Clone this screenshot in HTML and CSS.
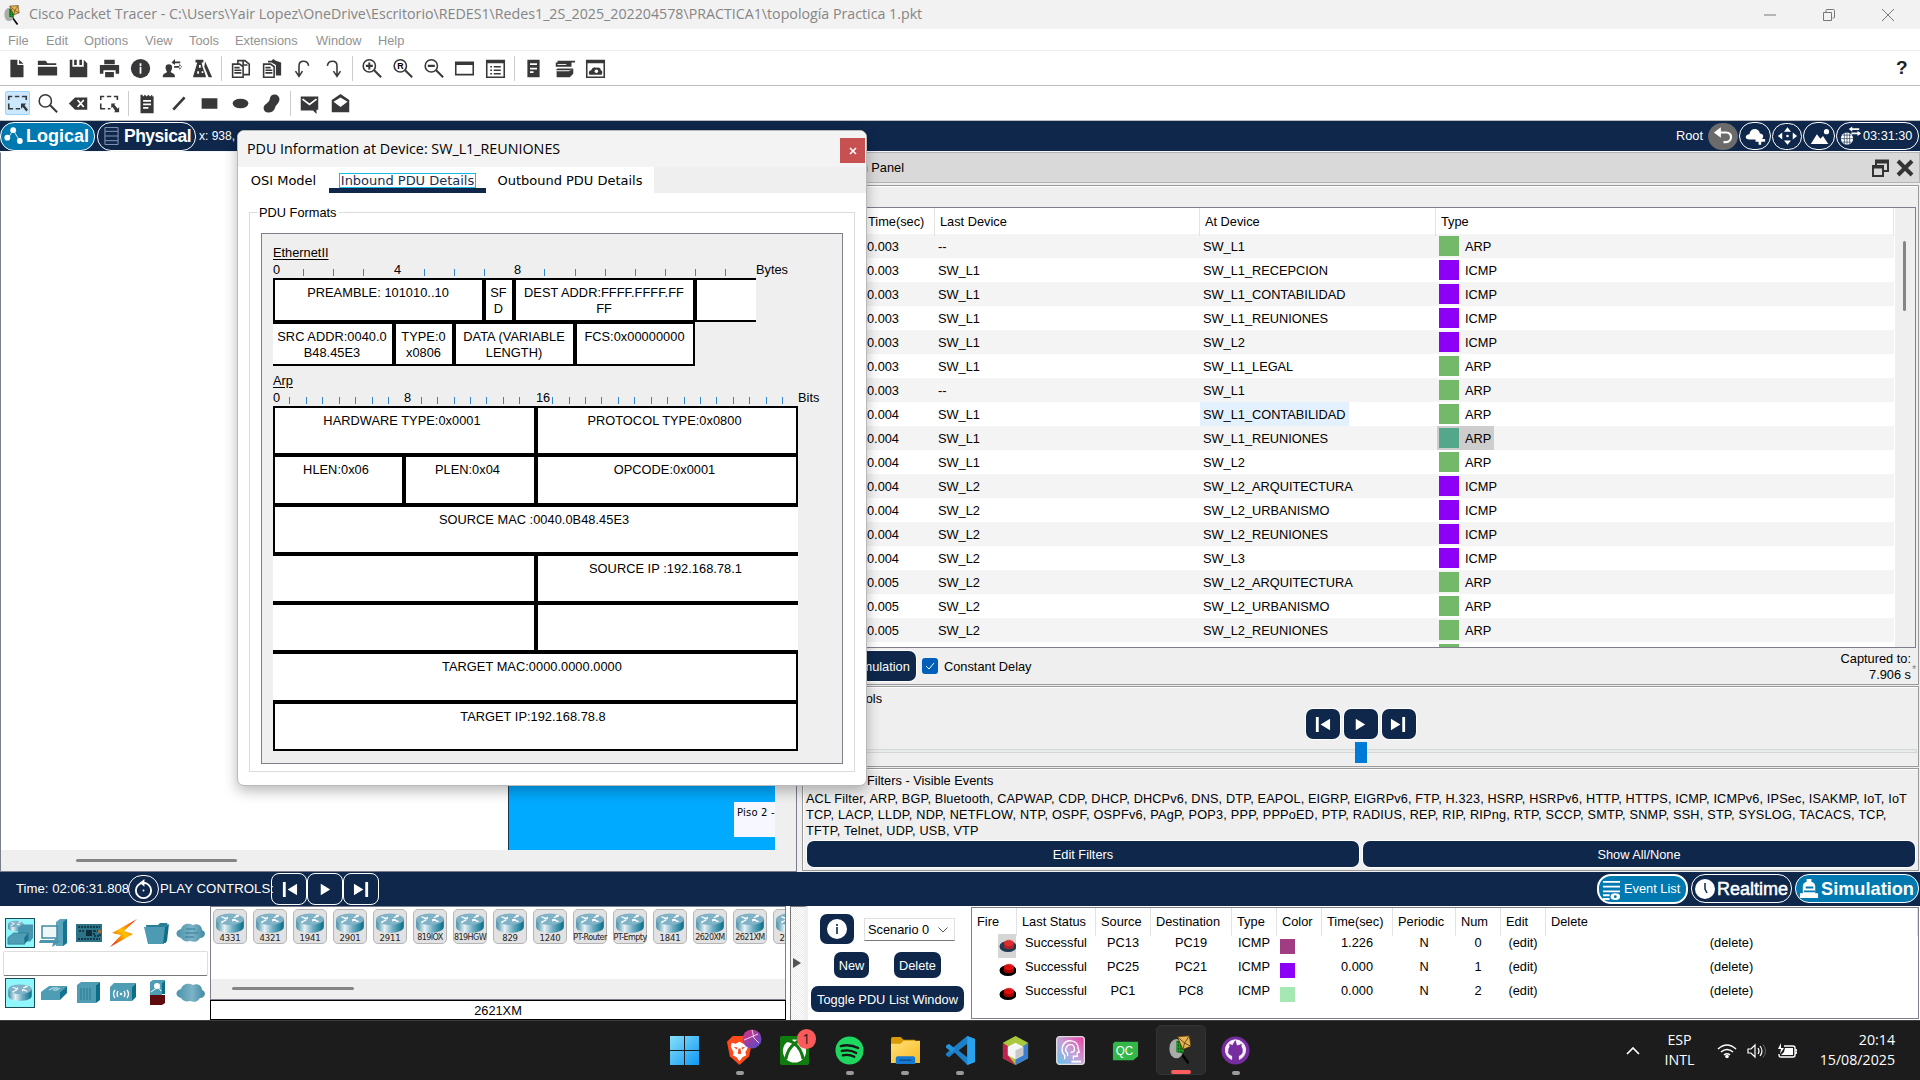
FILE: index.html
```html
<!DOCTYPE html>
<html lang="es">
<head>
<meta charset="utf-8">
<title>Cisco Packet Tracer</title>
<link rel="stylesheet" href="styles.css">
</head>
<body>
<svg class="defs" width="0" height="0">
  <defs>
    <linearGradient id="steel" x1="0" x2="1"><stop offset="0" stop-color="#3f8ba3"/><stop offset=".3" stop-color="#e6f1f5"/><stop offset=".6" stop-color="#6fadc2"/><stop offset="1" stop-color="#056f8a"/></linearGradient>
    <linearGradient id="cloudg" x1="0" x2="1"><stop offset="0" stop-color="#4a93ab"/><stop offset=".55" stop-color="#7db3c6"/><stop offset="1" stop-color="#3f8aa3"/></linearGradient>
    <linearGradient id="bolt" x1="0" x2="1" y1="1" y2="0"><stop offset="0" stop-color="#e01010"/><stop offset=".5" stop-color="#ffc400"/><stop offset="1" stop-color="#f01818"/></linearGradient>
    <linearGradient id="win" x1="0" x2="1" y1="0" y2="1"><stop offset="0" stop-color="#86e0fb"/><stop offset="1" stop-color="#1097f2"/></linearGradient>
    <linearGradient id="fold" x1="0" x2="1" y1="0" y2="1"><stop offset="0" stop-color="#ffdf78"/><stop offset="1" stop-color="#f8bb26"/></linearGradient>
    <linearGradient id="head" x1="0" x2="1" y1="1" y2="0"><stop offset="0" stop-color="#5cc8f0"/><stop offset=".5" stop-color="#c79fd8"/><stop offset="1" stop-color="#ee3ba0"/></linearGradient>
    <linearGradient id="ball" x1="0" x2="1" y1="0" y2="1"><stop offset="0" stop-color="#e22f7d"/><stop offset="1" stop-color="#4b4fd0"/></linearGradient>
    <symbol id="router" viewBox="0 0 30 21">
      <path d="M.5 6v8.500C.5 23 29.500 23 29.500 14.500V6z" fill="url(#steel)"/>
      <ellipse cx="15" cy="6.500" rx="14.500" ry="6" fill="#7fb2c6"/>
      <path d="M6 4l6 2M12 4v2H9M24 9l-6-2M18 9V7h3M6 9.500l5-2M8 9.700H5.500M19 5l5-2M21 2.800h3.500" stroke="#fff" stroke-width="1.300" fill="none"/>
    </symbol>
    <symbol id="first" viewBox="0 0 18 18"><path d="M2 1h3v16H2zM17 3v12L7 9z" fill="#fff"/></symbol>
    <symbol id="play" viewBox="0 0 18 18"><path d="M4 3l10 6-10 6z" fill="#fff"/></symbol>
    <symbol id="last" viewBox="0 0 18 18"><path d="M13 1h3v16h-3zM1 3v12l10-6z" fill="#fff"/></symbol>
    <symbol id="tracer" viewBox="0 0 28 36">
      <path d="M15 23l9 12" stroke="#050505" stroke-width="3"/>
      <ellipse cx="9" cy="17" rx="9" ry="12" fill="#a9aca8"/><path d="M9 7l8 1v15l-8-2z" fill="#0b5d12"/><path d="M10 8v14M13 8v14M16 8v14M9 11h9M9 15h9M9 19h8" stroke="#17b921" stroke-width="1"/>
      <path d="M10 2l15-1 2 13-10 4z" fill="#e9b453" stroke="#4a3410"/><path d="M10 2l9 8 6-9M17 18l2-8 8 4" fill="none" stroke="#4a3410"/>
    </symbol>
    <symbol id="fire" viewBox="0 0 18 14"><ellipse cx="9" cy="7.500" rx="8.500" ry="5.500" fill="currentColor"/><path d="M5 4v4c0 3 9 3 10 0V4z" fill="#c00000" fill-opacity=".85"/><ellipse cx="10" cy="4" rx="5" ry="3.300" fill="#f01010" fill-opacity=".85"/></symbol>
  </defs>
</svg>

<div class="desktop">
  <header class="titlebar">
    <svg class="app-icon" viewBox="0 0 28 36"><use href="#tracer"/></svg>
    <span class="title-text">Cisco Packet Tracer - C:\Users\Yair Lopez\OneDrive\Escritorio\REDES1\Redes1_2S_2025_202204578\PRACTICA1\topología Practica 1.pkt</span>
    <div class="win-controls">
      <svg viewBox="0 0 14 14"><path d="M1 7h12"/></svg>
      <svg viewBox="0 0 14 14"><path d="M1.500 4.500h8v8h-8zM4 4V2.500q0-1 1-1h6.500q1 0 1 1V9q0 1-1 1h-1"/></svg>
      <svg viewBox="0 0 14 14"><path d="M1 1l12 12M13 1L1 13"/></svg>
    </div>
  </header>

  <nav class="menubar">
    <span class="m1">File</span><span class="m2">Edit</span><span class="m3">Options</span><span class="m4">View</span><span class="m5">Tools</span><span class="m6">Extensions</span><span class="m7">Window</span><span>Help</span>
  </nav>

  <div class="toolbar">
    <i><svg viewBox="0 0 24 24"><path class="f" d="M5 2h8v6h7v14H5zM15 2l5 4.500h-5z"/></svg></i>
    <i><svg viewBox="0 0 24 24"><path class="f" d="M1 3h9l2 3h10v2H1zM1 10h22v10H1z"/></svg></i>
    <i><svg viewBox="0 0 24 24"><path class="f" d="M2 2h3v8h13V2l4 4v16H2z"/><path class="f" d="M7 2h3v6H7zM13 2h3v6h-3z"/></svg></i>
    <i><svg viewBox="0 0 24 24"><path class="f" d="M6 2h12v5H6zM1 8h22v10h-4v-4H5v4H1zM7 16h10v6H7z"/></svg></i>
    <i><svg viewBox="0 0 24 24"><circle class="f" cx="12" cy="12" r="11"/><path class="w" d="M11 6h2v3h-2zM11 10h2v8h-2z"/></svg></i>
    <i><svg viewBox="0 0 24 24"><path class="f" d="M2 22c0-5 3-4 5-6-3-5-2-9 2-9s5 4 2 9c2 2 5 1 5 6zM13 4h9v2h-9zM15 9h9v2h-9zM16 1v7l-4-3zM21 6.500v7l3-3z"/></svg></i>
    <i><svg viewBox="0 0 24 24"><path class="f" d="M4 2h9v3h-2l1 5 3 8 1 4H1l3-10 2-7H4zM15 4l8 18h-4l-5-12z"/><path class="w" d="M8 8h2v3H8zM6 15h2v3H6zM11 15h2v2h-2z"/></svg></i>
    <b></b>
    <i><svg viewBox="0 0 24 24"><path class="s" d="M3 7h8l4 3v12H3zM9 6V3h8l5 4v12h-6M5 11h6M5 14h8M5 17h8M15 3v5h5"/></svg></i>
    <i><svg viewBox="0 0 24 24"><path class="f" d="M8 3h4l2-2 3 2 6 2v15h-6V8l-5-3H8z"/><path class="s" d="M3 7h8l4 3v12H3zM5 11h6M5 14h8M5 17h8"/></svg></i>
    <i><svg viewBox="0 0 24 24"><path class="s" d="M8 20V9c0-7 10-7 11 0M4 15l4 6 4-6"/></svg></i>
    <i><svg viewBox="0 0 24 24"><path class="s" d="M16 20V9c0-7-10-7-11 0M12 15l4 6 4-6"/></svg></i>
    <b></b>
    <i><svg viewBox="0 0 24 24"><circle class="s" cx="9.500" cy="9" r="7"/><path class="s k" d="M15 14l8 8M5.500 9h8M9.500 5v8"/></svg></i>
    <i><svg viewBox="0 0 24 24"><circle class="s" cx="9.500" cy="9" r="7"/><path class="s k" d="M15 14l8 8"/><text x="6" y="13" font-size="10" font-weight="bold">R</text></svg></i>
    <i><svg viewBox="0 0 24 24"><circle class="s" cx="9.500" cy="9" r="7"/><path class="s k" d="M15 14l8 8M5.500 9h8"/></svg></i>
    <i><svg viewBox="0 0 24 24"><path class="s" d="M2 5h20v14H2zM2 7h20"/></svg></i>
    <i><svg viewBox="0 0 24 24"><path class="s" d="M2 3h20v19H2zM2 5h20M6 10h2M10 10h8M6 14h2M10 14h8M6 18h2M10 18h8"/></svg></i>
    <b></b>
    <i><svg viewBox="0 0 24 24"><path class="f" d="M5 2h14v20H5z"/><path class="ws" d="M8 7h8M8 12h8M8 16h4"/></svg></i>
    <i><svg viewBox="0 0 24 24"><path class="f" d="M4 3h20v2H4zM2 5h18v5H2zM4 12h18l-4 2H2zM3 15h14l5-3v6l-4 4H3z"/><path class="w" d="M4 7h10v1H4z"/></svg></i>
    <i><svg viewBox="0 0 24 24"><path class="s" d="M2 3h20v19H2zM2 5h20"/><path class="f" d="M5 19q-2-4 2-5 2-5 6-3 5-1 5 3 3 1 1 5z"/><circle class="w" cx="13" cy="15" r="2"/></svg></i>
    <strong>?</strong>
  </div>

  <div class="toolbar">
    <i class="on"><svg viewBox="0 0 24 24"><path class="s" d="M2 8V4h4M9 4h5M17 4h5v4M2 12v6h5M10 18h5"/><path class="f" d="M16 12h6l-2 2 4 5-2 2-4-5-2 2z"/></svg></i>
    <i><svg viewBox="0 0 24 24"><circle class="s" cx="9.500" cy="9" r="7"/><path class="s k" d="M15 14l8 8"/></svg></i>
    <i><svg viewBox="0 0 24 24"><path class="f" d="M8 5h14v14H8l-7-7z"/><path class="ws" d="M11 8l7 8M18 8l-7 8"/></svg></i>
    <i><svg viewBox="0 0 24 24"><path class="s" d="M2 8V4h4M9 4h5M17 4h4v4M2 12v6h5M10 18h3"/><path class="f" d="M14 12h5l-1.500 1.500 4 4.500L23 16v6h-6l1.500-1.500-3-4.500L14 17z"/></svg></i>
    <b></b>
    <i><svg viewBox="0 0 24 24"><path class="f" d="M4 2h2l1 2 2-2 2 2 2-2 2 2 2-2 1 2h1v19H4z"/><path class="ws" d="M7 9h9M7 13h9M7 17h6"/></svg></i>
    <i><svg viewBox="0 0 24 24"><path d="M6 19L19 5" stroke="#38383a" stroke-width="3"/></svg></i>
    <i><svg viewBox="0 0 24 24"><path class="f" d="M3 6h18v12H3z"/></svg></i>
    <i><svg viewBox="0 0 24 24"><ellipse class="f" cx="12" cy="12" rx="9" ry="5.500"/></svg></i>
    <i><svg viewBox="0 0 24 24"><path class="f" d="M10 7c1-8 12-6 11 1-1 5-4 5-5 9-2 7-13 7-13 0 0-5 6-5 7-10z"/></svg></i>
    <b></b>
    <i><svg viewBox="0 0 24 24"><path class="f" d="M2 4h20v15h-2v5l-4-4H2z"/><path class="ws" d="M4 7l8 6 8-6"/></svg></i>
    <i><svg viewBox="0 0 24 24"><path class="f" d="M2 8l10-7 10 7v14H2z"/><path class="w" d="M4 10l8-5 8 5-8 6z"/></svg></i>
  </div>

  <div class="navbar">
    <span class="pill logical"><svg viewBox="0 0 24 24"><path d="M4 16l7-11 8 13" stroke="#fff" fill="none"/><circle cx="4" cy="14" r="3.500" fill="#fff"/><circle cx="11" cy="5" r="3.500" fill="#fff"/><circle cx="19" cy="18" r="3.500" fill="#fff"/></svg>Logical</span>
    <span class="pill physical"><svg viewBox="0 0 16 20"><path d="M1 1h14v18H1zM1 5h14M1 10h14M1 15h14" stroke="#8fa0bb" fill="none"/></svg>Physical</span>
    <span class="coords">x: 938, y: 460</span>
    <span class="root">Root</span>
    <span class="pill ic back"><svg viewBox="0 0 24 20"><path d="M6 6h9c8 0 7 11 0 11h-3" stroke="#fff" stroke-width="2.500" fill="none"/><path d="M9 0v12L1 6z" fill="#fff"/></svg></span>
    <span class="pill ic w32"><svg viewBox="0 0 24 20"><path d="M5 14c-6 0-5-6 0-6 1-8 11-8 12-1 5 0 5 6 1 7z" fill="#fff"/><path d="M17 9v11M12 15h11" stroke="#fff" stroke-width="3"/></svg></span>
    <span class="pill ic"><svg viewBox="0 0 24 20"><path d="M12 0l4 5H8zM12 20l4-5H8zM1 10l5-4v8zM23 10l-5-4v8z" fill="#fff"/><circle cx="12" cy="10" r="1.500" fill="#fff"/></svg></span>
    <span class="pill ic w32"><svg viewBox="0 0 24 20"><path d="M2 19l7-11 4 5 3-3 6 9z" fill="#fff"/><circle cx="20" cy="5" r="3" fill="#fff"/></svg></span>
    <span class="pill clock"><svg viewBox="0 0 24 22"><circle cx="8" cy="14" r="7" fill="#fff"/><path d="M1 14h14M8 7v14M3 10h10M3 18h10M5 8v12M11 8v12" stroke="#0e274b" stroke-width=".7"/><path d="M12 3h10M13 8h10" stroke="#fff" stroke-width="2"/><path d="M14 0v6l-4-3zM20 5v6l4-3z" fill="#fff"/></svg>03:31:30</span>
  </div>

  <main class="main">
    <section class="workspace">
      <div class="canvas">
        <div class="floor"><div class="note">Piso 2 -</div></div>
      </div>
      <div class="hscroll"><div class="thumb"></div></div>
    </section>

    <section class="panel">
      <div class="dock-title"><span>Simulation Panel</span>
        <svg viewBox="0 0 18 18"><path d="M5 2h12v10h-4M5 7V2" fill="none" stroke="#333" stroke-width="2"/><path d="M4 2.500h14" stroke="#333" stroke-width="4"/><path d="M2 7h10v10H2z" fill="#d9d9d9" stroke="#333" stroke-width="2"/><path d="M1 8h12" stroke="#333" stroke-width="3"/></svg>
        <svg viewBox="0 0 18 18"><path d="M2 2l14 14M16 2L2 16" stroke="#333" stroke-width="4"/></svg>
      </div>
      <div class="frame events">
        <div class="frame-label">Event List</div>
        <div class="ev-table">
          <div class="ev-body">
            <div class="ev-row head"><span>Time(sec)</span><span>Last Device</span><span>At Device</span><span>Type</span></div>
            <div id="events"></div>
          </div>
          <div class="vscroll"><div class="thumb"></div></div>
        </div>
        <div class="ev-foot">
          <span class="btn reset">Reset Simulation</span>
          <svg class="check" viewBox="0 0 16 16"><rect width="16" height="16" rx="3" fill="#005fb8"/><path d="M4 8l3 3 5-6" stroke="#fff" fill="none"/></svg>
          <span class="delay">Constant Delay</span>
          <span class="captured">Captured to:<br>7.906 s</span><span class="star">*</span>
        </div>
      </div>
      <div class="frame playbox">
        <div class="frame-label">Play Controls</div>
        <div class="play-row">
          <span class="btn sq"><svg><use href="#first"/></svg></span><span class="btn sq"><svg><use href="#play"/></svg></span><span class="btn sq"><svg><use href="#last"/></svg></span>
        </div>
        <div class="slider"><div class="groove"></div><div class="knob"></div></div>
      </div>
      <div class="frame filters">
        <div class="frame-label"><span>Event List</span><span>Filters - Visible Events</span></div>
        <div class="filter-text"><span class="l1">ACL Filter, ARP, BGP, Bluetooth, CAPWAP, CDP, DHCP, DHCPv6, DNS, DTP, EAPOL, EIGRP, EIGRPv6, FTP, H.323, HSRP, HSRPv6, HTTP, HTTPS, ICMP, ICMPv6, IPSec, ISAKMP, IoT, IoT</span><br><span class="l2">TCP, LACP, LLDP, NDP, NETFLOW, NTP, OSPF, OSPFv6, PAgP, POP3, PPP, PPPoED, PTP, RADIUS, REP, RIP, RIPng, RTP, SCCP, SMTP, SNMP, SSH, STP, SYSLOG, TACACS, TCP,</span><br><span class="l3">TFTP, Telnet, UDP, USB, VTP</span></div>
        <div class="filter-btns"><span class="btn">Edit Filters</span><span class="btn">Show All/None</span></div>
      </div>
    </section>
  </main>

  <div class="timebar">
    <span class="time">Time: 02:06:31.808</span>
    <span class="pill cycle"><svg viewBox="0 0 22 22"><circle cx="11" cy="12" r="8" fill="none" stroke="#fff" stroke-width="2"/><path d="M12 0v8L7 4z" fill="#fff"/><circle cx="11" cy="12" r="1" fill="#fff"/></svg></span>
    <span class="time pc">PLAY CONTROLS:</span>
    <span class="tbtn"><svg><use href="#first"/></svg></span><span class="tbtn"><svg><use href="#play"/></svg></span><span class="tbtn"><svg><use href="#last"/></svg></span>
    <div class="modes">
      <span class="pill evlist"><svg viewBox="0 0 20 22"><path d="M1 3h18M1 8h18M1 13h18M1 17h7M1 21h7" stroke="#fff" stroke-width="2"/><ellipse cx="14" cy="18.500" rx="5" ry="3.500" fill="#fff"/><circle cx="14" cy="18.500" r="1.500" fill="#0079b0"/></svg>Event List</span>
      <span class="pill real"><svg viewBox="0 0 20 20"><circle cx="10" cy="10" r="10" fill="#fff"/><path d="M10 4v6l2 4" stroke="#0e274b" stroke-width="1.500" fill="none"/></svg>Realtime</span>
      <span class="pill sim"><svg viewBox="0 0 22 22"><path d="M1 21v-5h3V9q0-4 4-5V1h5v3q4 1 4 5v7h3v5z" fill="#fff"/><path d="M7 10h8M5 14h12" stroke="#0079b0" stroke-width="2"/></svg>Simulation</span>
    </div>
  </div>

  <section class="bottom">
    <div class="devices">
      <div class="dev-row">
        <i class="sel"><svg viewBox="0 0 30 30"><use href="#router" x="2" y="1" width="17" height="13"/><path d="M13 9l4-3h12v14l-3 4H13z" fill="#4796b0"/><path d="M2 20l6-5h16l-4 5v7H2z" fill="#4f9db5" stroke="#1b6f88" stroke-width=".6"/><path d="M20 20l4-5v7l-4 5z" fill="#16738e"/></svg></i>
        <i><svg viewBox="0 0 30 30"><path d="M17 4l4-3h7v24l-4 3h-7z" fill="#5ba5bc"/><path d="M24 4l4-3v24l-4 3z" fill="#17748f"/><path d="M3 8h15v12H3z" fill="#eef6f8" stroke="#3f8ba3" stroke-width="1.500"/><path d="M1 22h16l-2 3H0zM15 22l3-3 3 5-8 5z" fill="#4b96ae"/></svg></i>
        <i><svg viewBox="0 0 30 30"><path d="M2 6h26v18H2z" fill="#2e7287"/><path d="M4 9h22M4 21h22M20 13h6v5h-6zM5 13h5" stroke="#133c49" stroke-dasharray="2 1" stroke-width="2" fill="none"/><path d="M12 12h6v6h-6z" fill="#0f2e38"/><path d="M24 12h3v3h-3z" fill="#a36d3e"/></svg></i>
        <i><svg viewBox="0 0 30 30"><path d="M29 1L4 15l9 2L2 29l23-13-9-3z" fill="url(#bolt)"/></svg></i>
        <i><svg viewBox="0 0 30 30"><path d="M4 7h12l2-2h7l1 3-2 17H6z" fill="#2a7d95"/><path d="M2 9h20l4-3-2 17-3 3H6z" fill="#4c9bb3"/><path d="M21 26l4-3 2-17-4 3z" fill="#0f6e88"/></svg></i>
        <i><svg viewBox="0 0 30 30"><path d="M5 20c-6-1-6-8 0-9 2-6 8-6 12-4 5-2 9 1 9 5 5 2 3 8-2 8-3 5-7 4-10 3-4 1-7 0-9-3z" fill="url(#cloudg)"/><path d="M10 11h9M9 15h13M9 19h9" stroke="#337d95"/></svg></i>
      </div>
      <div class="search"></div>
      <div class="dev-row">
        <i class="sel"><svg viewBox="0 0 30 30"><use href="#router" x="2" y="5" width="26" height="19"/></svg></i>
        <i><svg viewBox="0 0 30 30"><path d="M2 14l8-6h18l-7 6v8H2z" fill="#4f9db5"/><path d="M21 14l7-6v7l-7 7z" fill="#16738e"/><path d="M10 12l4-2h5M14 12h4l3-2" stroke="#d7e9ef" fill="none"/></svg></i>
        <i><svg viewBox="0 0 30 30"><path d="M3 7l4-3h19l-4 3v18H3z" fill="#4f9db5"/><path d="M22 7l4-3v18l-4 3z" fill="#0a6e88"/><path d="M7 10v12M10 10v12M13 10v12M16 10v12" stroke="#26788f"/></svg></i>
        <i><svg viewBox="0 0 30 30"><path d="M2 9l4-4h22l-4 4v14H2z" fill="#4f9db5"/><path d="M24 9l4-4v14l-4 4z" fill="#0a6e88"/><path d="M7 12q-3 4 0 8M10 13q-2 3 0 6M19 12q3 4 0 8M16 13q2 3 0 6" stroke="#fff" fill="none" stroke-width="1.300"/><circle cx="13" cy="16" r="1.300" fill="#fff"/></svg></i>
        <i><svg viewBox="0 0 30 30"><path d="M8 4l3-2h12l-3 3v12H8z" fill="#4f9db5"/><path d="M20 5l3-3v14h-3z" fill="#0a6e88"/><path d="M8 17h15v8l-3 2H8z" fill="#5d0b0e"/><circle cx="15" cy="8" r="3" fill="#fff"/><path d="M9 14l7-5 3 4" stroke="#fff" fill="none"/></svg></i>
        <i><svg viewBox="0 0 30 30"><path d="M5 20c-6-1-6-8 0-9 2-6 8-6 12-4 5-2 9 1 9 5 5 2 3 8-2 8-3 5-7 4-10 3-4 1-7 0-9-3z" fill="url(#cloudg)"/></svg></i>
      </div>
    </div>
    <div class="models">
      <div class="tiles" id="tiles"></div>
      <div class="hscroll2"><div class="thumb"></div></div>
      <div class="model-name">2621XM</div>
    </div>
    <div class="expander"><svg viewBox="0 0 8 10"><path d="M0 0l8 5-8 5z" fill="#555"/></svg></div>
    <div class="scenario">
      <div class="sc-top"><span class="btn info"><svg viewBox="0 0 20 20"><circle cx="10" cy="10" r="10" fill="#fff"/><path d="M9.200 5h1.600v2H9.200zM9.200 8h1.600v7H9.200z" fill="#0e274b"/></svg></span>
        <span class="combo">Scenario 0<svg viewBox="0 0 10 6"><path d="M.5.5L5 5 9.500.5" fill="none" stroke="#555"/></svg></span></div>
      <div class="sc-mid"><span class="btn new">New</span><span class="btn del">Delete</span></div>
      <span class="btn toggle">Toggle PDU List Window</span>
    </div>
    <div class="pdu" id="pdu">
      <div class="pdu-row head"><span>Fire</span><span>Last Status</span><span>Source</span><span>Destination</span><span>Type</span><span>Color</span><span>Time(sec)</span><span>Periodic</span><span>Num</span><span>Edit</span><span>Delete</span></div>
    </div>
  </section>

  <footer class="taskbar">
    <div class="apps">
      <span class="app"><svg viewBox="0 0 30 30"><path d="M0 0h14.500v14.500H0zM15.500 0H30v14.500H15.500zM0 15.500h14.500V30H0zM15.500 15.500H30V30H15.500z" fill="url(#win)"/></svg></span>
      <span class="app run"><svg viewBox="0 0 30 30"><path d="M8 0h14l6 6-3 15-10 9-10-9L2 6z" fill="#fb4a1c"/><path d="M7 7l4 1 4-2 4 2 4-1 1 4-3 6 1 3-4 2-3 4-3-4-4-2 1-3-3-6z" fill="#fff"/><path d="M9 11l4 1-1 2zM21 11l-4 1 1 2zM14 13h2l1 5-2 1-2-1z" fill="#fb4a1c"/></svg><svg class="ball" viewBox="0 0 20 20"><circle cx="10" cy="10" r="9.500" fill="url(#ball)"/><path d="M2 11l14-6M10 1l2 8 5 5" stroke="#f7cfe6" fill="none"/></svg></span>
      <span class="app"><svg viewBox="0 0 30 30"><rect width="30" height="30" rx="2" fill="#107c10"/><circle cx="15" cy="15.500" r="12" fill="#fff"/><path d="M15 8C9 12 7 19 6 24M15 8c6 4 8 11 9 16M7 5c4-1 6 1 8 3 2-2 4-4 8-3" stroke="#107c10" stroke-width="3.200" fill="none"/></svg><em>1</em></span>
      <span class="app run"><svg viewBox="0 0 30 30"><circle cx="15" cy="15" r="14.500" fill="#1ed760"/><path d="M6 10.500q9-2.500 18 2M7 15.500q8-2 15 2M8 20q6.500-1.500 12 1.500" stroke="#161616" stroke-width="2.400" fill="none" stroke-linecap="round"/></svg></span>
      <span class="app run"><svg viewBox="0 0 30 30"><path d="M0 3q0-2 2-2h8l3 3h12v8H0z" fill="#d99a06"/><path d="M0 8h10l3-3h17v23H0z" fill="url(#fold)"/><path d="M5 29v-6q0-2 2-2h16q2 0 2 2v6z" fill="#1479d0"/><path d="M9 25h12" stroke="#0b4f93" stroke-width="1.500"/></svg></span>
      <span class="app run"><svg viewBox="0 0 30 30"><path d="M22 0l8 3v24l-8 3L9 17l-6 5-3-2v-2l18-15z" fill="#1b80c8"/><path d="M22 8v14l-9-7z" fill="#1c1c1c"/><path d="M0 10l3-2 6 5-3 4-6-5z" fill="#2196dc"/><path d="M22 0l8 3v24l-8 3z" fill="#2aa3ee"/></svg></span>
      <span class="app"><svg viewBox="0 0 30 30"><path d="M15 0l13 7v16l-13 7-13-7V7z" fill="#a9c83b"/><path d="M2 7l6 4v10l7 9L2 23z" fill="#bf2150"/><path d="M28 7v16l-13 7v-6l7-4V11z" fill="#3b7dce"/><path d="M15 7l8 4v9l-8 4-8-4v-9z" fill="#f5f5f5"/><path d="M15 15l8-4v9l-8 4z" fill="#c8c8c8"/></svg></span>
      <span class="app"><svg viewBox="0 0 30 30"><rect x=".7" y=".7" width="28.600" height="28.600" rx="3" fill="url(#head)" stroke="#dedede" stroke-width="1.400"/><path d="M9 24v-4q-4-3-2-10 3-6 9-5 7 1 7 8l1 4h-2v4h-4v3M12 21v-3q-4-4 0-8 5-3 7 2 1 5-4 5" stroke="#fff" stroke-width="1.400" fill="none"/><path d="M16 26.500h10" stroke="#fff" stroke-width="2"/></svg></span>
      <span class="app"><svg viewBox="0 0 30 30"><path d="M4 6h24v15l-5 4H2V8z" fill="#33b749"/><text x="5" y="20" font-size="13" fill="#fff" textLength="18" lengthAdjust="spacingAndGlyphs">QC</text></svg></span>
      <span class="app active"><svg viewBox="0 0 28 36"><use href="#tracer"/></svg></span>
      <span class="app run"><svg viewBox="0 0 30 30"><circle cx="15" cy="15" r="14.500" fill="#762d9f"/><path d="M15 4a10.500 10.500 0 0 0-4 20.200V20q-3 .5-4-2.500M15 4a10.500 10.500 0 0 1 4 20.200V19.500" fill="#f6effa" stroke="#f6effa"/><path d="M12.500 27v-6q-5-1-5-6 0-2 1.200-3.500V8l3.300 1.500h6L21.300 8v3.500q1.200 1.500 1.200 3.500 0 5-5 6v6z" fill="#762d9f"/></svg></span>
    </div>
    <div class="tray">
      <svg class="chev" viewBox="0 0 14 8"><path d="M1 7l6-6 6 6" stroke="#fff" stroke-width="1.700" fill="none"/></svg>
      <span class="lang">ESP<br>INTL</span>
      <svg class="ti" viewBox="0 0 20 16"><path d="M1 6q9-8 18 0M4 9q6-5 12 0M7 12q3-2.500 6 0" stroke="#fff" stroke-width="1.600" fill="none"/><circle cx="10" cy="13.500" r="1.800" fill="#fff"/></svg>
      <svg class="ti" viewBox="0 0 20 16"><path d="M1 6h3l4-4v12l-4-4H1zM11 5q2 3 0 6M13 3q4 5 0 10" stroke="#fff" stroke-width="1.200" fill="none"/><path d="M16 1.500q5 6.500 0 13" stroke="#666" fill="none"/></svg>
      <svg class="ti" viewBox="0 0 20 16"><path d="M7 3h9q2 0 2 2v7q0 2-2 2H4q-2 0-2-2v-1M18 7h2v3h-2" stroke="#fff" stroke-width="1.400" fill="none"/><path d="M8 5h8v7H4l3-3zM4 0L1 6h3l-1 5 4-6H4z" fill="#fff"/></svg>
      <span class="date">20:14<br>15/08/2025</span>
    </div>
  </footer>

  <div class="dialog">
    <div class="dlg-title"><span>PDU Information at Device: SW_L1_REUNIONES</span><i><svg viewBox="0 0 8 8"><path d="M1 1l6 6M7 1L1 7" stroke="#fff" stroke-width="1.600"/></svg></i></div>
    <div class="tabs"><span class="tab t1">OSI Model</span><span class="tab t2"><u>Inbound PDU Details</u></span><span class="tab t3">Outbound PDU Details</span></div>
    <div class="group">
      <div class="group-label">PDU Formats</div>
      <div class="inner">
        <div class="fmt">EthernetII</div>
        <div class="scale bytes" id="bytes"></div>
        <div class="cells eth r1"><span>PREAMBLE: 101010..10</span><span>SF<br>D</span><span>DEST ADDR:FFFF.FFFF.FF<br>FF</span><span class="nr"></span></div>
        <div class="cells eth r2"><span class="nl">SRC ADDR:0040.0<br>B48.45E3</span><span>TYPE:0<br>x0806</span><span>DATA (VARIABLE<br>LENGTH)</span><span>FCS:0x00000000</span></div>
        <div class="fmt arp">Arp</div>
        <div class="scale bits" id="bits"></div>
        <div class="cells two"><span>HARDWARE TYPE:0x0001</span><span>PROTOCOL TYPE:0x0800</span></div>
        <div class="cells three tall"><span>HLEN:0x06</span><span>PLEN:0x04</span><span>OPCODE:0x0001</span></div>
        <div class="cells one"><span class="nr">SOURCE MAC :0040.0B48.45E3</span></div>
        <div class="cells two"><span class="nl"></span><span class="nr">SOURCE IP :192.168.78.1</span></div>
        <div class="cells two"><span class="nl"></span><span class="nr"></span></div>
        <div class="cells one tall"><span class="nl">TARGET MAC:0000.0000.0000</span></div>
        <div class="cells one"><span>TARGET IP:192.168.78.8</span></div>
      </div>
    </div>
  </div>
</div>
<script src="script.js"></script>
</body>
</html>
```
FILE: styles.css
```css
* { box-sizing: border-box; }
body { margin: 0; overflow: hidden; background: #fff; color: #000; font: 12.8px/16px "Liberation Sans", Arial, sans-serif; white-space: nowrap; }
i, em { font-style: normal; }
svg { display: block; flex: none; }
.defs { position: absolute; }
.desktop { position: relative; width: 1920px; height: 1080px; display: flex; flex-direction: column; overflow: hidden; }

.titlebar { height: 29px; background: #f2f2f2; display: flex; align-items: center; padding-left: 2px; color: #858585; font: 14.230px/20px "Open Sans", "Noto Sans", sans-serif; }
.title-text { margin-top: -2px; }
.app-icon { width: 20px; height: 20px; margin-right: 7px; }
.win-controls { margin-left: auto; display: flex; gap: 45px; padding-right: 25px; }
.win-controls svg { width: 14px; height: 14px; fill: none; stroke: #777; }

.menubar { height: 22px; border-bottom: 1px solid #eee; padding: 4px 0 0 8px; display: flex; color: #929292; }
.m1, .m2 { width: 38px; } .m3 { width: 61px; } .m4 { width: 44px; } .m5 { width: 46px; } .m6 { width: 81px; } .m7 { width: 62px; }

.toolbar { height: 35px; border-bottom: 1px solid #bdbdbd; display: flex; align-items: center; padding-left: 1px; }
.toolbar i { width: 31px; height: 24px; display: flex; justify-content: center; align-items: center; }
.toolbar i svg { width: 21px; height: 21px; }
.toolbar b { width: 1px; height: 25px; margin: 0 3px; background: #ccc; }
.toolbar strong { margin-left: auto; width: 24px; font-size: 19px; color: #222; }
.toolbar .on { width: 25px; margin: 0 2px 0 4px; background: #cce8ff; border: 1px solid #99d1ff; border-radius: 2px; }
.f { fill: #38383a; } .w { fill: #fff; }
.s { fill: none; stroke: #38383a; stroke-width: 1.800; }
.k { stroke-width: 2.300; }
.ws { fill: none; stroke: #fff; stroke-width: 2; }

.navbar { height: 30px; background: #0e274b; display: flex; align-items: center; color: #fff; flex: none; }
.pill { display: flex; align-items: center; border: 1px solid #fff; border-radius: 14px; height: 29px; flex: none; color: #fff; }
.logical { width: 95px; background: #0079b0; font: bold 18px/26px "Liberation Sans", sans-serif; padding-left: 3px; gap: 2px; }
.logical svg { width: 20px; height: 20px; }
.physical { width: 99px; margin-left: 2px; font: bold 17.500px/26px "Liberation Sans", sans-serif; letter-spacing: -.5px; padding-left: 6px; gap: 5px; }
.physical svg { width: 15px; height: 20px; }
.coords { margin-left: 3px; font-size: 12px; }
.root { margin-left: auto; margin-right: 5px; }
.ic { width: 30px; height: 27px; justify-content: center; margin-right: 1px; }
.ic svg { width: 21px; height: 18px; }
.back { background: #6b6b6b; border-color: #6b6b6b; }
.w32 { width: 32px; height: 28px; }
.clock { width: 83px; height: 28px; padding-left: 3px; gap: 2px; margin-right: 1px; font-size: 12.700px; }
.clock svg { width: 21px; height: 20px; }

.main { height: 721px; display: grid; grid-template-columns: 797px 1fr; flex: none; background: #efefef; border-top: 1px solid #f4f6fa; }
.workspace { border: 1px solid #7a7d8c; border-top-color: #fff; display: flex; flex-direction: column; background: #efefef; }
.canvas { width: 774px; height: 697px; background: #fff; display: flex; justify-content: flex-end; align-items: flex-end; }
.floor { width: 267px; height: 120px; background: #00aaff; border-left: 1px solid #163a55; display: flex; justify-content: flex-end; align-items: flex-end; padding-bottom: 13px; }
.note { width: 41px; height: 35px; background: #f7f8ff; padding: 3px 0 0 3px; font: 10px/16px "DejaVu Sans", sans-serif; letter-spacing: .2px; }
.hscroll { flex: 1; padding: 9px 0 0 75px; }
.hscroll .thumb, .hscroll2 .thumb { width: 161px; height: 3px; border-radius: 2px; background: #858585; }

.panel { display: flex; flex-direction: column; padding: 0 1px 0 5px; }
.dock-title { height: 31px; border: 1px solid #b4b4b4; background: #d9d9d9; display: flex; align-items: center; padding: 1px 5px 0 5px; margin-right: -1px; }
.dock-title span { margin-right: auto; }
.dock-title svg { width: 18px; height: 18px; margin-left: 7px; }
.frame { border: 1px solid #9a9a9a; box-shadow: inset 1px 1px #fff; background: #efefef; }
.frame-label { line-height: 16px; padding-left: 3px; }
.events { margin-top: 2px; height: 500px; display: flex; flex-direction: column; }
.events .frame-label { height: 21px; }
.ev-table { height: 441px; margin: 0 2px 0 3px; border: 1px solid #7d7f8c; display: flex; background: #fff; overflow: hidden; }
.ev-body { width: 1087px; overflow: hidden; }
.ev-row { display: grid; grid-template-columns: 128px 265px 236px 1fr; height: 24px; line-height: 26px; letter-spacing: -.01px; }
.ev-row > span { padding-left: 60px; }
.ev-row > span + span { padding-left: 3px; display: flex; align-items: flex-start; }
.ev-row:nth-child(odd) { background: #f4f4f4; }
.ev-row.head { height: 26px; line-height: 28px; background: #fff; }
.ev-row.head > span { border-right: 1px solid #e3e3e3; padding-left: 61px; }
.ev-row.head > span + span { padding-left: 5px; }
.hover { background: #e2f1fd; margin-left: -3px; padding: 0 3px; height: 24px; }
.sw { width: 20px; height: 20px; background: #74b869; margin: 2px 6px 0 0; }
.sw.icmp { background: #8c00f5; }
.picked { background: #cdcdcd; display: flex; align-items: flex-start; margin-left: -2px; padding: 0 3px 0 2px; height: 24px; }
.picked .sw { background: #55a78b; }
.vscroll { flex: 1; background: #efefef; margin-left: 1px; padding: 33px 0 0 8px; }
.vscroll .thumb { width: 3px; height: 70px; background: #858585; border-radius: 2px; }
.ev-foot { display: flex; align-items: center; height: 36px; padding-left: 4px; }
.btn { background: #0e274b; color: #fff; border-radius: 7px; display: flex; align-items: center; justify-content: center; box-shadow: 0 0 0 1px #fff; flex: none; padding-top: 1px; }
.reset { width: 109px; height: 30px; }
.check { width: 16px; height: 16px; margin: 0 6px 0 6px; }
.delay { padding-top: 1px; }
.captured { margin-left: auto; text-align: right; padding-top: 1px; }
.star { width: 7px; padding: 5px 0 0 1px; font-size: 11px; color: #888; }
.playbox { margin-top: 1px; height: 81px; }
.playbox .frame-label { padding-top: 4px; height: 22px; }
.play-row { display: flex; gap: 4px; justify-content: center; height: 33px; }
.sq { width: 34px; height: 30px; padding-top: 0; }
.sq svg { width: 17px; height: 17px; }
.slider { height: 21px; display: grid; justify-items: center; align-items: center; }
.groove, .knob { grid-area: 1 / 1; }
.groove { width: 1112px; height: 4px; border: 1px solid #d3d7d6; background: #e8ebea; margin-top: -4px; }
.knob { width: 12px; height: 21px; background: #007ad9; }
.filters { margin-top: 1px; height: 103px; padding: 4px 3px 0; }
.filters .frame-label { padding-left: 0; height: 18px; display: flex; }
.filters .frame-label span:first-child { width: 61px; }
.filter-text { height: 50px; font-size: 12.700px; }
.l1 { letter-spacing: .158px; } .l2 { letter-spacing: .225px; } .l3 { letter-spacing: .18px; }
.filter-btns { display: grid; grid-template-columns: 1fr 1fr; gap: 4px; padding-left: 1px; }
.filter-btns .btn { height: 26px; padding-top: 2px; }

.timebar { height: 34px; background: #0e274b; display: flex; align-items: center; padding-left: 16px; color: #fff; flex: none; }
.time { font-size: 13.200px; width: 112px; }
.cycle { width: 31px; height: 28px; justify-content: center; }
.cycle svg { width: 21px; height: 21px; }
.pc { padding-left: 1px; width: 112px; letter-spacing: .07px; }
.tbtn { width: 36px; height: 32px; border: 1px solid #fff; border-radius: 8px; display: flex; align-items: center; justify-content: center; }
.tbtn svg { width: 17px; height: 17px; }
.modes { margin-left: auto; display: flex; gap: 3px; margin-right: 1px; }
.evlist { width: 91px; height: 30px; border-width: 2px; background: #0079b0; padding-left: 3px; gap: 3px; }
.evlist svg { width: 19px; height: 21px; }
.real { width: 101px; font: 500 18px/26px "Liberation Sans", sans-serif; padding-left: 3px; gap: 2px; -webkit-text-stroke: .5px #fff; }
.real svg { width: 20px; height: 20px; }
.sim { width: 124px; background: #0079b0; font: bold 18.200px/26px "Liberation Sans", sans-serif; padding-left: 3px; gap: 1px; }
.sim svg { width: 21px; height: 21px; }

.bottom { height: 114px; display: flex; flex: none; background: #fff; }
.devices { width: 210px; padding: 12px 2px 0 3px; }
.dev-row { display: flex; gap: 4.300px; height: 30px; padding-left: 2px; }
.dev-row i { width: 30px; height: 30px; }
.dev-row .sel { background: #8ff7fb; border: 1px solid #1b4d57; }
.dev-row .sel svg { width: 28px; height: 28px; }
.search { height: 25px; margin: 3px 0 2px; border: 1px solid #dedede; border-bottom: 1px solid #777; border-radius: 2px; }
.models { width: 576px; border-left: 1px solid #7d7f8c; display: flex; flex-direction: column; }
.tiles { height: 73px; border-top: 1px solid #7d7f8c; border-right: 1px solid #7d7f8c; padding: 2px 0 0 2px; display: flex; gap: 6px; overflow: hidden; }
.tile { width: 34px; height: 35px; flex: none; border: 1px solid #b5b5b5; border-radius: 5px; background: #e2e2e2; display: flex; flex-direction: column; align-items: center; padding-top: 3px; }
.tile svg { width: 30px; height: 20px; }
.tile span { font: 8.500px/10px "DejaVu Sans", sans-serif; color: #222; letter-spacing: -.2px; }
.tile span.small { font-size: 8px; letter-spacing: -.55px; }
.hscroll2 { height: 21px; background: #efefef; border-right: 1px solid #7d7f8c; border-bottom: 1px solid #7d7f8c; padding: 8px 0 0 21px; }
.hscroll2 .thumb { width: 122px; }
.model-name { height: 20px; border: 1px solid #000; margin-left: -1px; text-align: center; line-height: 19px; }
.expander { width: 18px; margin-left: 4px; border-left: 1px solid #777; border-top: 1px solid #777; border-right: 4px solid #efefef; background: repeating-conic-gradient(#eaeaea 0 25%, #fff 0 50%) 0 0 / 2px 2px; padding: 51px 0 0 2px; }
.expander svg { width: 8px; height: 10px; }
.scenario { width: 163px; padding: 8px 7px 0 3px; display: flex; flex-direction: column; align-items: flex-start; }
.sc-top { display: flex; align-items: center; gap: 10px; padding-left: 9px; }
.info { width: 34px; height: 30px; padding-top: 0; }
.info svg { width: 20px; height: 20px; }
.combo { width: 91px; height: 23px; border: 1px solid #e0e0e0; border-bottom-color: #777; padding: 1px 6px 0 3px; display: flex; align-items: center; justify-content: space-between; }
.combo svg { width: 10px; height: 6px; }
.sc-mid { display: flex; gap: 25px; margin: 8px 0 8px 23px; }
.new { width: 35px; height: 26px; } .del { width: 47px; height: 26px; }
.toggle { width: 153px; height: 26px; }
.pdu { width: 948px; height: 112px; margin-top: 1px; border: 1px solid #7d7f8c; }
.pdu-row { display: grid; grid-template-columns: 45px 79px 55px 81px 45px 45px 71px 63px 45px 45px 1fr; height: 24px; line-height: 18px; text-align: center; }
.pdu-row > span { margin-left: -1px; }
.pdu-row.head { height: 26px; line-height: 28px; text-align: left; }
.pdu-row.head span { border-right: 1px solid #e3e3e3; padding-left: 5px; margin-left: 0; }
.pdu-row .color { width: 15px; height: 15px; margin: 5px 0 0 3px; }
.pdu-row .fire { margin-left: 26px; width: 18px; height: 24px; padding: 5px 0 0 1px; overflow: hidden; color: #000; }
.pdu-row .fire svg { width: 18px; height: 14px; }
.pdu-row .fire.sel { background: #d6d6d6; color: #00203f; }
.fire.sel svg { opacity: .85; }

.taskbar { height: 60px; background: #1c1c1c; border-top: 1px solid #3c3c3c; display: flex; flex: none; padding-left: 657px; color: #fff; }
.apps { display: flex; padding-top: 4px; }
.app { position: relative; width: 50px; height: 50px; margin: 0 2.570px; display: flex; justify-content: center; padding-top: 11px; border-radius: 5px; }
.app svg { width: 29px; height: 29px; }
.app .ball { position: absolute; left: 27px; top: 4px; width: 20px; height: 20px; }
.app em { position: absolute; left: 27px; top: 4px; width: 19px; height: 20px; border-radius: 10px; background: #fa5a5a; color: #222; text-align: center; font: 14px/20px "Open Sans", sans-serif; }
.app.run::after, .app.active::after { content: ""; position: absolute; left: 21px; bottom: 0; width: 8px; height: 4px; border-radius: 2px; background: #9a9a9a; }
.app.active { background: #2a2a2a; border: 1px solid #333; padding-top: 9px; }
.app.active::after { left: 14px; width: 20px; background: #fa5f5f; }
.tray { margin-left: auto; margin-right: 24px; display: flex; align-items: center; font: 14.200px/20px "Open Sans", "Noto Sans", sans-serif; }
.chev { width: 14px; height: 8px; margin-right: 24px; }
.lang { text-align: center; width: 31px; margin: -2px 22px 0 0; }
.ti { width: 20px; height: 16px; margin-right: 10px; }
.date { width: 88px; margin: -2px 1px 0 0; text-align: right; }

.dialog { position: absolute; left: 237px; top: 130px; width: 630px; height: 656px; border: 1px solid #b9b9b9; border-radius: 7px; background: #fff; box-shadow: 0 5px 14px rgba(0,0,0,.28); display: flex; flex-direction: column; }
.dlg-title { height: 36px; background: #f3f3f3; border-radius: 6px 6px 0 0; display: flex; justify-content: space-between; padding: 8px 1px 0 9px; font: 14.300px/20px "Open Sans", "Noto Sans", sans-serif; flex: none; }
.dlg-title i { width: 25px; height: 25px; margin-top: -1px; background: #c75050; display: flex; align-items: center; justify-content: center; }
.dlg-title svg { width: 8px; height: 8px; }
.tabs { height: 26px; background: #efefef; display: flex; font: 13px/28px "DejaVu Sans", sans-serif; letter-spacing: -.02px; flex: none; }
.tab { background: #fff; display: flex; justify-content: center; }
.t1 { width: 91px; } .t2 { width: 157px; border-bottom: 5px solid #0e274b; color: #1c2f52; } .t3 { width: 168px; }
.t2 u { text-decoration: none; border: 1px solid #19b9e8; height: 15px; line-height: 14px; margin-top: 6px; padding: 0 1px; }
.group { margin: 19px 11px 13px 11px; height: 561px; border: 1px solid #dcdcdc; padding: 0 11px; }
.group-label { width: 81px; margin: -9px 0 11px -3px; padding: 1px 0 0 1px; background: #fff; height: 18px; }
.inner { height: 531px; background: #efefef; border: 1px solid #7d7f8c; padding: 11px 0 0 11px; }
.fmt { height: 16px; text-decoration: underline; text-underline-offset: 2px; }
.arp { margin-top: 7px; }
.scale { height: 17px; position: relative; }
.scale span, .scale i { position: absolute; top: 1px; }
.scale i { top: 8px; width: 1px; height: 7px; background: #2f86d1; }
.cells { display: grid; width: 525px; height: 49px; text-align: center; letter-spacing: .04px; }
.cells.tall { height: 50px; }
.cells span { background: #fff; border: 2px solid #000; padding: 5px 5px 0 0; }
.cells .nl { border-left: 0; } .cells .nr { border-right: 0; }
.eth { height: 44px; }
.eth span { padding-right: 1px; }
.eth.r1 { width: 483px; grid-template-columns: 211px 30px 181px 61px; }
.eth.r2 { width: 422px; grid-template-columns: 121px 60px 121px 120px; }
.two { grid-template-columns: 263px 262px; }
.three { grid-template-columns: 131px 132px 262px; }
.one { grid-template-columns: 525px; }
```
FILE: script.js
```js
const events = [
  ['0.003', '--', 'SW_L1', 'ARP'], ['0.003', 'SW_L1', 'SW_L1_RECEPCION', 'ICMP'],
  ['0.003', 'SW_L1', 'SW_L1_CONTABILIDAD', 'ICMP'], ['0.003', 'SW_L1', 'SW_L1_REUNIONES', 'ICMP'],
  ['0.003', 'SW_L1', 'SW_L2', 'ICMP'], ['0.003', 'SW_L1', 'SW_L1_LEGAL', 'ARP'],
  ['0.003', '--', 'SW_L1', 'ARP'], ['0.004', 'SW_L1', 'SW_L1_CONTABILIDAD', 'ARP'],
  ['0.004', 'SW_L1', 'SW_L1_REUNIONES', 'ARP'], ['0.004', 'SW_L1', 'SW_L2', 'ARP'],
  ['0.004', 'SW_L2', 'SW_L2_ARQUITECTURA', 'ICMP'], ['0.004', 'SW_L2', 'SW_L2_URBANISMO', 'ICMP'],
  ['0.004', 'SW_L2', 'SW_L2_REUNIONES', 'ICMP'], ['0.004', 'SW_L2', 'SW_L3', 'ICMP'],
  ['0.005', 'SW_L2', 'SW_L2_ARQUITECTURA', 'ARP'], ['0.005', 'SW_L2', 'SW_L2_URBANISMO', 'ARP'],
  ['0.005', 'SW_L2', 'SW_L2_REUNIONES', 'ARP'], ['', '', '', 'ARP'],
];
document.getElementById('events').innerHTML = events.map(([t, last, at, type], i) => {
  const label = t ? type : '';
  const swatch = `<i class="sw ${type === 'ICMP' ? 'icmp' : ''}"></i>${label}`;
  return `<div class="ev-row"><span>${t}</span><span>${last}</span>` +
    `<span>${i === 7 ? `<i class="hover">${at}</i>` : at}</span>` +
    `<span>${i === 8 ? `<i class="picked">${swatch}</i>` : swatch}</span></div>`;
}).join('');

const models = ['4331', '4321', '1941', '2901', '2911', '819IOX', '819HGW', '829', '1240', 'PT-Router', 'PT-Empty', '1841', '2620XM', '2621XM', '2811'];
document.getElementById('tiles').innerHTML = models.map(m =>
  `<div class="tile"><svg><use href="#router"/></svg><span class="${m.length > 5 ? 'small' : ''}">${m}</span></div>`).join('');

const pdus = [
  ['PC13', 'PC19', '#a03c82', '1.226', 0], ['PC25', 'PC21', '#8c00f5', '0.000', 1], ['PC1', 'PC8', '#a6e8b4', '0.000', 2],
];
document.getElementById('pdu').insertAdjacentHTML('beforeend', pdus.map(([src, dst, color, time, n]) =>
  `<div class="pdu-row"><span class="fire ${n ? '' : 'sel'}"><svg><use href="#fire"/></svg></span><span>Successful</span>` +
  `<span>${src}</span><span>${dst}</span><span>ICMP</span><span class="color" style="background:${color}"></span>` +
  `<span>${time}</span><span>N</span><span>${n}</span><span>(edit)</span><span>(delete)</span></div>`).join(''));

function scale(id, count, step, every, unit, end) {
  let html = '';
  for (let i = 0; i < count; i++) {
    const numbered = i % every === 0 && i < every * 3;
    if (numbered) html += `<span style="left:${Math.round(i * step)}px">${i}</span>`;
    else html += `<i style="left:${Math.round(i * step)}px"></i>`;
  }
  document.getElementById(id).innerHTML = html + `<span style="left:${end}px">${unit}</span>`;
}
scale('bytes', 16, 30.15, 4, 'Bytes', 483);
scale('bits', 32, 16.42, 8, 'Bits', 525);
```
